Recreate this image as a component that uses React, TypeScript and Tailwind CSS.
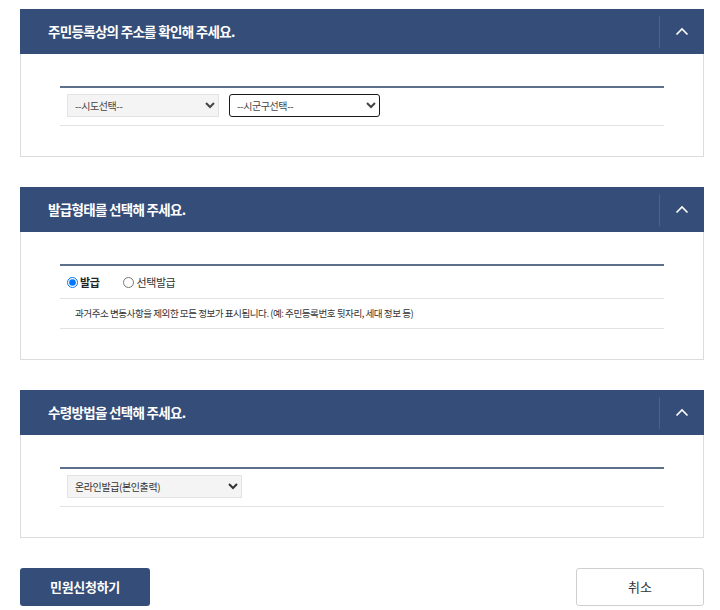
import React from "react";

const font = { fontFamily: '"Noto Sans CJK KR", "Noto Sans", sans-serif' };

function Chevron() {
  return (
    <svg width="14" height="9" viewBox="0 0 14 9" fill="none">
      <path d="M1.5 7.5 L7 2 L12.5 7.5" stroke="#ffffff" strokeWidth="1.6" />
    </svg>
  );
}

function Panel({ title, children }: { title: string; children: React.ReactNode }) {
  return (
    <div className="w-[684px]">
      <div className="flex h-[45px] items-center bg-[#354e79]">
        <div className="flex-1 pl-[28px] text-[13.5px] font-bold tracking-[-0.7px] text-white">{title}</div>
        <div className="flex h-[32px] w-[45px] items-center justify-center border-l border-[#4a6189]">
          <Chevron />
        </div>
      </div>
      <div className="border-x border-b border-[#dcdcdc] px-[39px] pt-[32px] pb-[30px]">
        <div className="border-t-2 border-[#5c6f8b]">{children}</div>
      </div>
    </div>
  );
}

export default function App() {
  return (
    <div className="min-h-[610px] bg-white pl-[20px] pt-[9px]" style={font}>
      <div className="flex flex-col gap-[30px]">
        <Panel title="주민등록상의 주소를 확인해 주세요.">
          <div className="flex items-center gap-[10px] border-b border-[#e2e2e2] px-[7px] pt-[6px] pb-[8px]">
            <select className="h-[23px] w-[152px] rounded-none border border-[#e3e3e3] bg-[#f4f4f4] pl-[3px] text-[10px] tracking-[-0.4px] text-[#444]">
              <option>--시도선택--</option>
            </select>
            <select className="h-[23px] w-[151px] rounded-[3px] border-[1.5px] border-[#1a1a1a] bg-white pl-[3px] text-[10px] tracking-[-0.4px] text-[#444]">
              <option>--시군구선택--</option>
            </select>
          </div>
        </Panel>

        <Panel title="발급형태를 선택해 주세요.">
          <div className="flex h-[33px] items-center border-b border-[#e2e2e2] px-[7px]">
            <label className="flex items-center gap-[2px]">
              <input type="radio" name="t" defaultChecked className="m-0 h-[11px] w-[11px]" />
              <span className="text-[11px] font-bold tracking-[-0.4px] text-[#222]">발급</span>
            </label>
            <label className="ml-[24px] flex items-center gap-[2px]">
              <input type="radio" name="t" className="m-0 h-[11px] w-[11px]" />
              <span className="text-[11px] tracking-[-0.4px] text-[#333]">선택발급</span>
            </label>
          </div>
          <div className="flex h-[30px] items-center border-b border-[#e2e2e2] px-[15px] text-[9.6px] tracking-[-0.5px] text-[#333]">
            과거주소 변동사항을 제외한 모든 정보가 표시됩니다. (예: 주민등록번호 뒷자리, 세대 정보 등)
          </div>
        </Panel>

        <Panel title="수령방법을 선택해 주세요.">
          <div className="flex items-center border-b border-[#e2e2e2] px-[7px] pt-[6px] pb-[8px]">
            <select className="h-[23px] w-[175px] rounded-none border border-[#e3e3e3] bg-[#f4f4f4] pl-[3px] text-[10px] tracking-[-0.4px] text-[#333]">
              <option>온라인발급(본인출력)</option>
            </select>
          </div>
        </Panel>

        <div className="flex w-[684px] items-center justify-between">
          <button className="h-[38px] w-[130px] rounded-[3px] bg-[#354e79] text-[13px] font-bold tracking-[-0.3px] text-white">
            민원신청하기
          </button>
          <button className="h-[38px] w-[128px] rounded-[3px] border border-[#cfcfcf] bg-white text-[13px] text-[#333]">
            취소
          </button>
        </div>
      </div>
    </div>
  );
}
